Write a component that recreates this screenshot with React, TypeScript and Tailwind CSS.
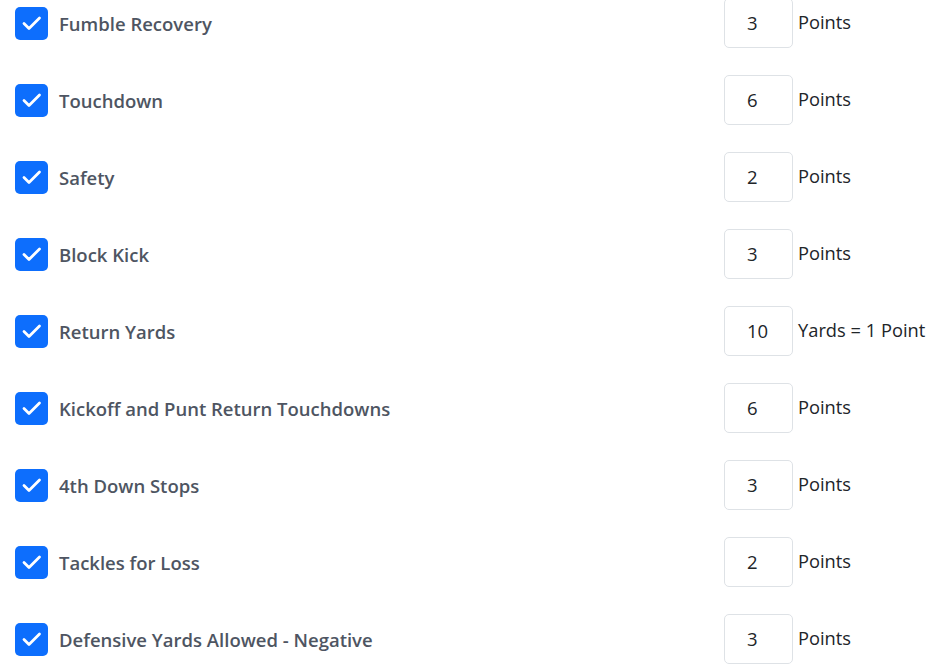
import React from 'react';

interface Rule {
  label: string;
  value: number;
  unit: string;
}

const rules: Rule[] = [
  { label: 'Fumble Recovery', value: 3, unit: 'Points' },
  { label: 'Touchdown', value: 6, unit: 'Points' },
  { label: 'Safety', value: 2, unit: 'Points' },
  { label: 'Block Kick', value: 3, unit: 'Points' },
  { label: 'Return Yards', value: 10, unit: 'Yards = 1 Point' },
  { label: 'Kickoff and Punt Return Touchdowns', value: 6, unit: 'Points' },
  { label: '4th Down Stops', value: 3, unit: 'Points' },
  { label: 'Tackles for Loss', value: 2, unit: 'Points' },
  { label: 'Defensive Yards Allowed - Negative', value: 3, unit: 'Points' },
];

const Check = (): JSX.Element => (
  <span className="block h-[33px] w-[33px] shrink-0 rounded-[5px] bg-[#0d6efd]">
    <svg width="33" height="33" viewBox="0 0 33 33" fill="none">
      <path
        d="M9 16.5l5 5 10.5-10.5"
        stroke="#fff"
        strokeWidth="2.8"
        strokeLinecap="round"
        strokeLinejoin="round"
      />
    </svg>
  </span>
);

const RuleRow = ({ label, value, unit }: Rule): JSX.Element => (
  <div className="flex h-[50px] items-center">
    <div className="flex w-[724px] items-center gap-[11px] pl-[15px]">
      <Check />
      <span className="mt-[2px] text-[18.5px] font-semibold text-[#4e5562]">{label}</span>
    </div>
    <div className="flex h-[50px] w-[69px] items-center rounded-[5px] border border-[#dee2e6] pl-[22px] text-[18.5px] text-[#212529]">
      {value}
    </div>
    <span className="mb-[3px] ml-[5px] text-[18.3px] text-[#212529]">{unit}</span>
  </div>
);

export default function App(): JSX.Element {
  return (
    <div className="mt-[-2px] flex flex-col gap-[27px] bg-white font-['Open_Sans',sans-serif]">
      {rules.map((r) => (
        <RuleRow key={r.label} {...r} />
      ))}
    </div>
  );
}
